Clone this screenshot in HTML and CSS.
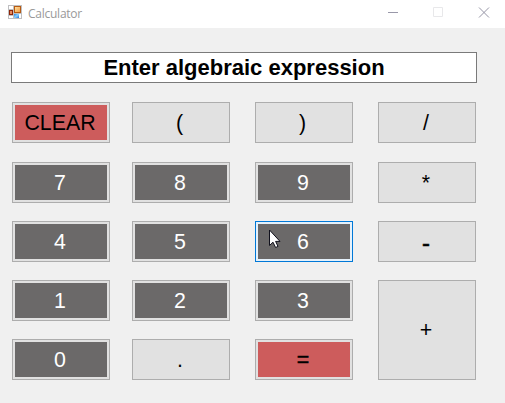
FILE: index.html
```html
<!DOCTYPE html>
<html lang="en">
<head>
<meta charset="utf-8">
<title>Calculator</title>
<link rel="stylesheet" href="styles.css">
</head>
<body>
<header class="titlebar">
  <svg class="app-icon" width="14" height="14" viewBox="0 0 14 14" shape-rendering="crispEdges">
    <defs>
      <linearGradient id="gold" x1="0" y1="0" x2="1" y2="1"><stop offset="0" stop-color="#ffe2a4"/><stop offset="1" stop-color="#f2983c"/></linearGradient>
      <linearGradient id="blue" x1="0" y1="0" x2="1" y2="1"><stop offset="0" stop-color="#2586e0"/><stop offset=".5" stop-color="#8cd0ff"/><stop offset="1" stop-color="#1e6fd0"/></linearGradient>
    </defs>
    <path fill="#fff" stroke="#bfbfc1" d="M.5 .5h13v13H.5zM5.500 .5v13M.5 4.500h5M.5 10.500h5M5.500 8.500h8"/>
    <path fill="url(#gold)" stroke="#b65a12" d="M6.500 1.500h6v6h-6z"/>
    <path fill="#e98a5c" stroke="#8d2609" d="M1.500 5.500h3v4h-3z"/>
    <path fill="url(#blue)" d="M6 9h5v4H6z"/>
  </svg>
  <span class="title">Calculator</span>
  <svg class="controls" width="102" height="11" viewBox="0 0 102 11">
    <g fill="none">
      <path stroke="#9998a9" d="M0 5.500h10"/>
      <path stroke="#e8e8ea" d="M45.500 .5h9v9h-9z"/>
      <path stroke="#9594a5" d="M91 .5l10 10M101 .5l-10 10"/>
    </g>
  </svg>
</header>
<main class="calculator">
  <div class="display">Enter algebraic expression</div>
  <div class="keys">
    <button class="key red">CLEAR</button>
    <button class="key paren">(</button>
    <button class="key paren">)</button>
    <button class="key">/</button>
    <button class="key dark">7</button>
    <button class="key dark">8</button>
    <button class="key dark">9</button>
    <button class="key">*</button>
    <button class="key dark">4</button>
    <button class="key dark">5</button>
    <button class="key dark hovered">6
      <svg class="cursor" width="13" height="20" viewBox="0 0 13 20"><path fill="#fff" stroke="#10101c" d="M1.500 1v15.500l3.500-3.300 2.600 5.300 2.400-1.100-2.400-5h4.400z"/></svg>
    </button>
    <button class="key minus">-</button>
    <button class="key dark">1</button>
    <button class="key dark">2</button>
    <button class="key dark">3</button>
    <button class="key tall">+</button>
    <button class="key dark">0</button>
    <button class="key">.</button>
    <button class="key red equals">=</button>
  </div>
</main>
</body>
</html>
```
FILE: styles.css
```css
* { box-sizing: border-box; }
body {
  margin: 0;
  height: 403px;
  overflow: hidden;
  background: #f0f0f0;
  font-family: "Liberation Sans", Arial, sans-serif;
}
.titlebar {
  display: flex;
  height: 28px;
  padding: 5px 15px 0 8px;
  background: #fff;
}
.title {
  margin-left: 6px;
  color: #999;
  font: 12px/17px "Open Sans", "Noto Sans", sans-serif;
  letter-spacing: -.25px;
}
.controls { margin: 2px 0 0 auto; }
.calculator { padding: 24px 28px 0 11px; }
.display {
  height: 31px;
  border: 1px solid #7a7a7a;
  background: #fff;
  color: #000;
  font-size: 22px;
  font-weight: bold;
  line-height: 30px;
  text-align: center;
}
.keys {
  display: grid;
  grid-template-columns: 120px 123px 123px 98px;
  grid-template-rows: 60px 59px 59px 59px 41px;
  margin: 19px 0 0 1px;
}
.key {
  position: relative;
  width: 98px;
  height: 41px;
  padding: 2px 2px 0 0;
  border: 1px solid #adadad;
  background: #e1e1e1;
  color: #000;
  font-family: inherit;
  font-size: 21.33px;
  line-height: 37px;
  text-align: center;
}
.dark, .red { box-shadow: inset 0 0 0 2px #e1e1e1; }
.dark { background-color: #6b6969; color: #fff; }
.red { background-color: #cd5c5c; }
.hovered {
  border-color: #0078d7;
  box-shadow: inset 0 0 0 2px #e5f1fb;
}
.paren { padding-right: 3px; }
.minus, .equals { -webkit-text-stroke: .5px #000; }
.minus { font-size: 24px; }
.tall { grid-row: 4 / 6; grid-column: 4; height: 100px; padding-top: 1px; }
.cursor { position: absolute; left: 12px; top: 7px; }
```
